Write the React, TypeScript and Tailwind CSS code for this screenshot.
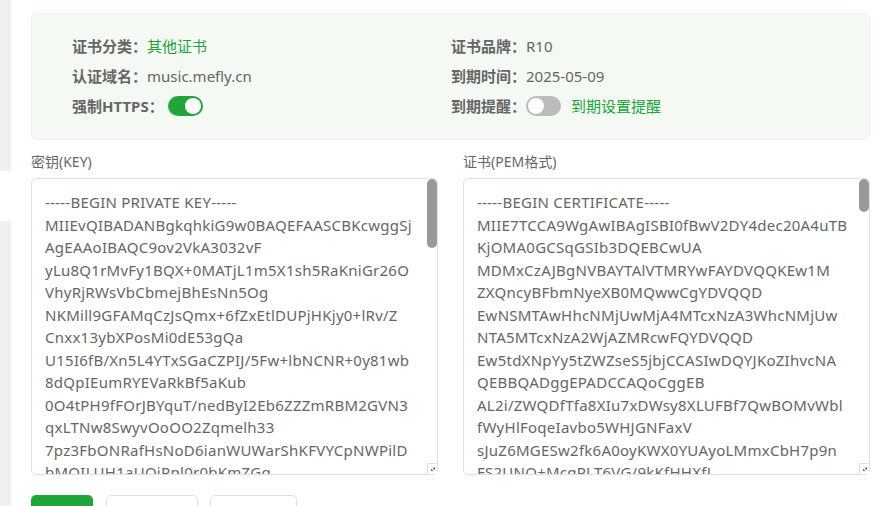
const keyText = [
  '-----BEGIN PRIVATE KEY-----',
  'MIIEvQIBADANBgkqhkiG9w0BAQEFAASCBKcwggSj',
  'AgEAAoIBAQC9ov2VkA3032vF',
  'yLu8Q1rMvFy1BQX+0MATjL1m5X1sh5RaKniGr26O',
  'VhyRjRWsVbCbmejBhEsNn5Og',
  'NKMill9GFAMqCzJsQmx+6fZxEtlDUPjHKjy0+lRv/Z',
  'Cnxx13ybXPosMi0dE53gQa',
  'U15I6fB/Xn5L4YTxSGaCZPIJ/5Fw+lbNCNR+0y81wb',
  '8dQpIEumRYEVaRkBf5aKub',
  '0O4tPH9fFOrJBYquT/nedByI2Eb6ZZZmRBM2GVN3',
  'qxLTNw8SwyvOoOO2Zqmelh33',
  '7pz3FbONRafHsNoD6ianWUWarShKFVYCpNWPilD',
  'bMOILUH1aUOiRpl0r0bKmZGq',
].join('\n');

const certText = [
  '-----BEGIN CERTIFICATE-----',
  'MIIE7TCCA9WgAwIBAgISBI0fBwV2DY4dec20A4uTB',
  'KjOMA0GCSqGSIb3DQEBCwUA',
  'MDMxCzAJBgNVBAYTAlVTMRYwFAYDVQQKEw1M',
  'ZXQncyBFbmNyeXB0MQwwCgYDVQQD',
  'EwNSMTAwHhcNMjUwMjA4MTcxNzA3WhcNMjUw',
  'NTA5MTcxNzA2WjAZMRcwFQYDVQQD',
  'Ew5tdXNpYy5tZWZseS5jbjCCASIwDQYJKoZIhvcNA',
  'QEBBQADggEPADCCAQoCggEB',
  'AL2i/ZWQDfTfa8XIu7xDWsy8XLUFBf7QwBOMvWbl',
  'fWyHlFoqeIavbo5WHJGNFaxV',
  'sJuZ6MGESw2fk6A0oyKWX0YUAyoLMmxCbH7p9n',
  'FS2UNQ+McgPLT6VG/9kKfHHXfL',
].join('\n');

function Toggle({ on }: { on: boolean }) {
  return (
    <span
      className={`flex h-[20px] w-[35px] shrink-0 items-center rounded-full px-[2px] ${
        on ? 'justify-end bg-[#20a53a]' : 'justify-start bg-[#bbbbbb]'
      }`}
    >
      <span className="h-[16px] w-[16px] rounded-full bg-white" />
    </span>
  );
}

function Label({ children }: { children: React.ReactNode }) {
  return <span className="font-bold text-[#666666]">{children}：</span>;
}

function CertBox({ title, value, thumbClass }: { title: string; value: string; thumbClass: string }) {
  return (
    <div className="w-[407px]">
      <div className="h-[38px] pt-[11px] text-[14px] leading-[22px] text-[#666666]">{title}</div>
      <div className="relative h-[297px]">
        <textarea
          readOnly
          wrap="off"
          value={value}
          className="block h-full w-full resize-none overflow-hidden rounded-[5px] border border-[#e0e0e8] bg-white pl-[13px] pt-[12px] text-[15px] leading-[22.5px] tracking-[0.25px] text-[#666666] outline-none"
        />
        {/* scrollbar thumb and resize corner */}
        <div className={`absolute right-[1px] top-[1px] w-[10px] rounded-[5px] bg-[#999999] ${thumbClass}`} />
        <div className="absolute bottom-[1px] right-[1px] flex h-[11px] w-[10px] items-center justify-center border-l border-t border-[#e0e0e8] bg-white">
          <svg viewBox="0 0 6 6" className="h-[6px] w-[6px]" fill="#666666">
            <path d="M1 5V2.5L3.5 5z" />
            <path d="M2.6 2.6 5 1v3z" />
          </svg>
        </div>
      </div>
    </div>
  );
}

export default function App() {
  return (
    <div className="flex h-[506px] w-[884px] overflow-hidden bg-white font-['Noto_Sans','Noto_Sans_CJK_SC',sans-serif] text-[15px]">
      <div className="flex w-[11px] shrink-0 flex-col">
        <div className="h-[171px] bg-[#f0f0f0]" />
        <div className="h-[50px] bg-white" />
        <div className="flex-1 bg-[#f0f0f0]" />
      </div>

      <div className="flex-1 pl-[20px] pt-[13px]">
        <div className="h-[127px] w-[839px] rounded-[5px] border border-[#eef3ee] bg-[#f4f9f3] pl-[40px] pt-[17px]">
          <div className="grid grid-cols-[379px_1fr] auto-rows-[30px] items-center">
            <div className="flex items-center">
              <Label>证书分类</Label>
              <span className="text-[#20a53a]">其他证书</span>
            </div>
            <div className="flex items-center">
              <Label>证书品牌</Label>
              <span className="text-[#666666]">R10</span>
            </div>
            <div className="flex items-center">
              <Label>认证域名</Label>
              <span className="text-[#666666]">music.mefly.cn</span>
            </div>
            <div className="flex items-center">
              <Label>到期时间</Label>
              <span className="text-[#666666]">2025-05-09</span>
            </div>
            <div className="flex items-center">
              <Label>强制HTTPS</Label>
              <span className="ml-[4px]">
                <Toggle on />
              </span>
            </div>
            <div className="flex items-center">
              <Label>到期提醒</Label>
              <Toggle on={false} />
              <span className="ml-[10px] text-[#20a53a]">到期设置提醒</span>
            </div>
          </div>
        </div>

        <div className="flex gap-[25px]">
          <CertBox title="密钥(KEY)" value={keyText} thumbClass="h-[69px]" />
          <CertBox title="证书(PEM格式)" value={certText} thumbClass="h-[33px]" />
        </div>

        <div className="mt-[20px] flex">
          <button type="button" className="h-[34px] w-[62px] rounded-[5px] bg-[#20a53a]" />
          <button type="button" className="ml-[13px] h-[34px] w-[92px] rounded-[5px] border border-[#e0e0e8] bg-white" />
          <button type="button" className="ml-[12px] h-[34px] w-[87px] rounded-[5px] border border-[#e0e0e8] bg-white" />
        </div>
      </div>
    </div>
  );
}
